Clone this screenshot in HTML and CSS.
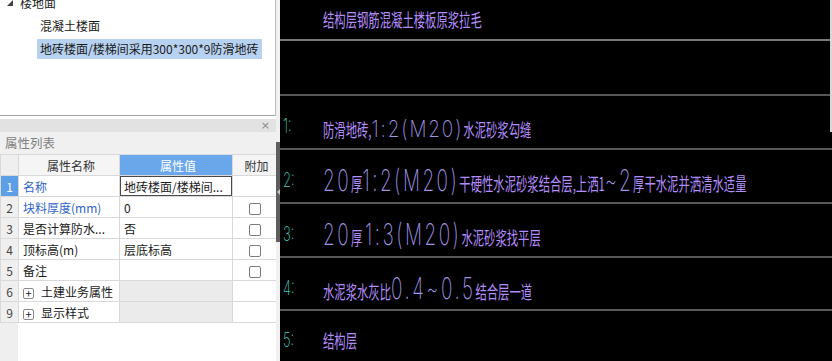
FILE: index.html
```html
<!DOCTYPE html>
<html>
    <head>
        <meta charset="utf-8">
        <title>属性列表</title>
        <link rel="stylesheet" href="styles.css">
    </head>
    <body>
        <div class="app">
            <div class="left">
                <div class="tree">
                    <div class="node root">
                        <svg class="caret" viewBox="0 0 6 6"><polygon points="6,0 6,6 0,6" fill="#404040"/></svg>楼地面
                    </div>
                    <div class="node leaf plain">混凝土楼面</div>
                    <div class="node leaf"><span class="sel">地砖楼面/楼梯间采用300*300*9防滑地砖</span></div>
                </div>
                <div class="props">
                    <div class="titlebar"><span class="close">×</span></div>
                    <div class="caption">属性列表</div>
                    <div class="sheet">
                        <table class="grid">
                            <colgroup>
                                <col style="width:18px">
                                <col style="width:101px">
                                <col style="width:113px">
                                <col style="width:44px">
                            </colgroup>
                            <tr>
                                <th class="num"></th>
                                <th>属性名称</th>
                                <th class="cur">属性值</th>
                                <th>附加</th>
                            </tr>
                            <tr class="active">
                                <td class="num">1</td>
                                <td class="link">名称</td>
                                <td class="edit">地砖楼面/楼梯间...</td>
                                <td class="extra"></td>
                            </tr>
                            <tr>
                                <td class="num">2</td>
                                <td class="link">块料厚度(mm)</td>
                                <td>0</td>
                                <td class="extra"><span class="check"></span></td>
                            </tr>
                            <tr>
                                <td class="num">3</td>
                                <td>是否计算防水...</td>
                                <td>否</td>
                                <td class="extra"><span class="check"></span></td>
                            </tr>
                            <tr>
                                <td class="num">4</td>
                                <td>顶标高(m)</td>
                                <td>层底标高</td>
                                <td class="extra"><span class="check"></span></td>
                            </tr>
                            <tr>
                                <td class="num">5</td>
                                <td>备注</td>
                                <td></td>
                                <td class="extra"><span class="check"></span></td>
                            </tr>
                            <tr>
                                <td class="num">6</td>
                                <td><span class="plus">+</span>土建业务属性</td>
                                <td class="grey"></td>
                                <td class="extra"></td>
                            </tr>
                            <tr>
                                <td class="num">9</td>
                                <td><span class="plus">+</span>显示样式</td>
                                <td class="grey"></td>
                                <td class="extra"></td>
                            </tr>
                        </table>
                    </div>
                </div>
            </div>
            <div class="split">
                <div class="handle"><span class="arrow"></span></div>
            </div>
            <div class="cad">
                <div class="edge"></div>
                <div class="band top">
                    <div class="lbl"></div>
                    <span class="txt">结构层钢筋混凝土楼板原浆拉毛</span>
                </div>
                <div class="band blank"></div>
                <div class="band">
                    <div class="lbl"><span>1:</span></div>
                    <span class="txt">防滑地砖,<span class="n sm">1:2(M20)</span>水泥砂浆勾缝</span>
                </div>
                <div class="band">
                    <div class="lbl"><span>2:</span></div>
                    <span class="txt"><span class="n">20</span>厚<span class="n">1:2(M20)</span>干硬性水泥砂浆结合层,上洒1<span class="n">~2</span>厚干水泥并洒清水适量</span>
                </div>
                <div class="band">
                    <div class="lbl"><span>3:</span></div>
                    <span class="txt"><span class="n">20</span>厚 <span class="n">1:3(M20)</span>水泥砂浆找平层</span>
                </div>
                <div class="band short">
                    <div class="lbl"><span>4:</span></div>
                    <span class="txt">水泥浆水灰比<span class="n">0.4~0.5</span>结合层一道</span>
                </div>
                <div class="band rest">
                    <div class="lbl"><span>5:</span></div>
                    <span class="txt">结构层</span>
                </div>
            </div>
        </div>
    </body>
</html>
```

FILE: styles.css
```css
body {
    margin: 0;
    font-family: "Noto Sans CJK SC", sans-serif;
    font-size: 12px;
    color: #1a1a1a;
    background-color: #000;
}

.app {
    display: flex;
    height: 361px;
    overflow: hidden;
}

/* left side: tree + property grid */

.left {
    width: 276px;
    flex: none;
    display: flex;
    flex-direction: column;
    background-color: #fff;
}

.tree {
    height: 116px;
    box-sizing: border-box;
    border-bottom: 1px solid #a9a9a9;
    border-right: 1px solid #bcbcbc;
    overflow: hidden;
}

.node {
    height: 23px;
    line-height: 23px;
    white-space: nowrap;
}

.root {
    margin-top: -9px;
    padding-left: 7px;
    display: flex;
    align-items: center;
}

.caret {
    width: 6px;
    height: 6px;
    margin-right: 7px;
}

.leaf {
    padding-left: 37px;
}

.leaf.plain {
    padding-left: 40px;
}

.sel {
    display: inline-block;
    line-height: 20px;
    padding: 0 3px;
    background-color: #b7d1f0;
}

.props {
    flex: 1;
    display: flex;
    flex-direction: column;
}

.titlebar {
    margin-top: 3px;
    height: 13px;
    background-color: #e2e2e2;
    display: flex;
    justify-content: flex-end;
    align-items: center;
    padding-right: 6px;
}

.close {
    color: #8a8a8a;
    font-family: "DejaVu Sans", sans-serif;
    font-size: 11px;
    line-height: 1;
}

.caption {
    height: 22px;
    line-height: 22px;
    background-color: #f0f0f0;
    color: #808080;
    padding-left: 5px;
    font-size: 12.5px;
}

.sheet {
    flex: 1;
    background: linear-gradient(to right, #efefef 18px, #fff 18px);
}

.grid {
    border-collapse: collapse;
    table-layout: fixed;
    width: 276px;
}

.grid th,
.grid td {
    height: 20px;
    padding: 0 0 0 4px;
    border: 1px solid #d9d9d9;
    white-space: nowrap;
    overflow: hidden;
    font-weight: normal;
    text-align: left;
}

.grid th {
    background-color: #f5f5f5;
    text-align: center;
    color: #333;
}

.grid th.cur {
    background-color: #6aa7ea;
    color: #fff;
}

.grid .num {
    text-align: center;
    padding: 0;
    background-color: #efefef;
    color: #444;
}

.grid tr.active td.num {
    background-color: #5c9fe7;
    color: #fff;
}

.link {
    color: #2f64c8;
}

.grid td.edit {
    box-shadow: inset 0 0 0 1px #4a4a4a;
}

.grid td.grey {
    background-color: #ebebeb;
}

.grid td.extra {
    text-align: center;
    padding: 0;
}

.check {
    display: inline-block;
    width: 12px;
    height: 12px;
    box-sizing: border-box;
    border: 1px solid #7c7c7c;
    border-radius: 2px;
    vertical-align: middle;
}

.plus {
    display: inline-block;
    width: 11px;
    height: 11px;
    box-sizing: border-box;
    border: 1px solid #8a8a8a;
    border-radius: 2px;
    text-align: center;
    line-height: 9px;
    font-size: 11px;
    margin-right: 7px;
    vertical-align: middle;
}

/* splitter */

.split {
    width: 4px;
    flex: none;
    background-color: #f0f0f0;
    padding-top: 142px;
}

.handle {
    height: 100px;
    background-color: #5e5e5e;
    display: flex;
    align-items: center;
    justify-content: center;
}

.arrow {
    width: 0;
    height: 0;
    border-top: 3px solid transparent;
    border-bottom: 3px solid transparent;
    border-right: 3px solid #c4c4c4;
}

/* drawing area */

.cad {
    flex: 1;
    position: relative;
    background-color: #000;
    display: flex;
    flex-direction: column;
    overflow: hidden;
}

.edge {
    position: absolute;
    top: 0;
    right: 0;
    width: 2px;
    height: 132px;
    background-color: #d8d8d8;
}

.band {
    flex: none;
    display: flex;
    align-items: center;
    box-sizing: border-box;
    height: 54px;
    padding: 8px 0 0 3px;
    border-top: 2px solid #585858;
}

.band.top {
    height: 39px;
    border-top: 0;
    padding: 0 0 2px 3px;
}

.band.blank {
    height: 55px;
    border-top-color: #777;
}

.band.short {
    height: 53px;
}

.band.rest {
    flex: 1;
}

.lbl {
    width: 40px;
    flex: none;
}

.lbl span {
    display: inline-block;
    transform: scaleX(0.65);
    transform-origin: left center;
    font-family: Inter, sans-serif;
    font-weight: 200;
    font-size: 20px;
    color: #3fd2c2;
}

.txt {
    display: inline-block;
    transform: scaleX(0.63);
    transform-origin: left center;
    white-space: nowrap;
    font-size: 18px;
    line-height: 1;
    color: #b48dfc;
}

.txt .n {
    font-family: Inter, sans-serif;
    font-weight: 200;
    font-size: 30px;
    letter-spacing: 4px;
    color: #a192e2;
}

.txt .n.sm {
    display: inline-block;
    letter-spacing: 3px;
    transform: scaleY(0.78);
    transform-origin: 50% 80%;
}
```
